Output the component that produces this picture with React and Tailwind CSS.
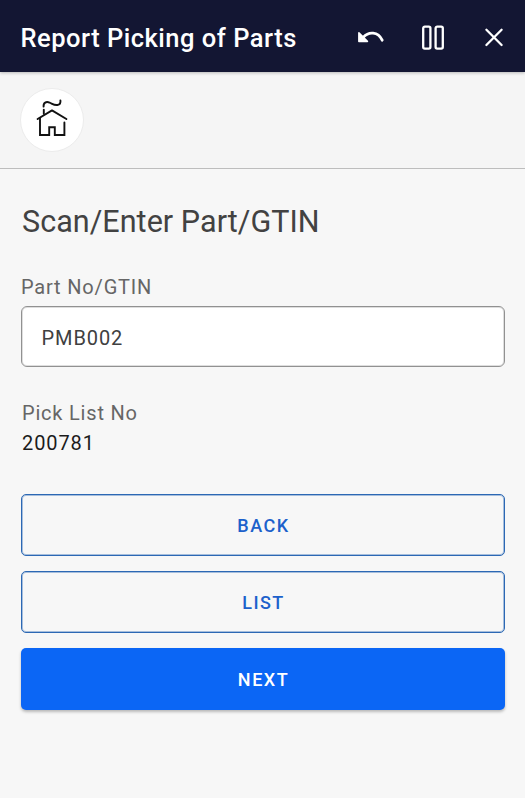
import { useState } from 'react';

/* ── Icons ───────────────────────────────────────────────────────────────── */
function UndoIcon() {
  return (
    <svg width="28" height="14" viewBox="0 0 28 14" fill="none">
      <path d="M1.9 1.9 L1.9 10.4 L10.4 10.4 Z" fill="#fff" stroke="#fff" strokeWidth="1.6" strokeLinejoin="round" />
      <path d="M6.4 6.2 C11.5 .4 21 .2 25.2 9.2" stroke="#fff" strokeWidth="2.8" strokeLinecap="round" />
    </svg>
  );
}

function PauseIcon() {
  return (
    <svg width="24" height="26" viewBox="0 0 24 26" fill="none" stroke="#fff" strokeWidth="2.3">
      <rect x="2.2" y="1.6" width="7.2" height="22" rx="1.6" />
      <rect x="14.6" y="1.6" width="7.2" height="22" rx="1.6" />
    </svg>
  );
}

function CloseIcon() {
  return (
    <svg width="20" height="20" viewBox="0 0 20 20" fill="none" stroke="#fff" strokeWidth="2.3" strokeLinecap="round">
      <path d="M2.4 1.8 L17.6 17 M17.6 1.8 L2.4 17" />
    </svg>
  );
}

function HomeIcon() {
  return (
    <svg width="32" height="38" viewBox="0 0 32 38" fill="none" stroke="#111" strokeWidth="1.9" strokeLinecap="round" strokeLinejoin="round">
      <path d="M7.6 7.6 C7.2 3.6 10.2 2.2 13.6 3.6 C16.4 4.8 18.2 6.4 21.4 6 C23.8 5.6 24.8 3.8 24.4 1.4" />
      <path d="M7.8 10.8 V14.8" />
      <path d="M1.6 20 L16 11.4 L30.4 20" />
      <path d="M4 19 V36 H13.2 V28.2 H18.8 V36 H28.4 V23.4" strokeLinejoin="miter" />
    </svg>
  );
}

/* ── Buttons ─────────────────────────────────────────────────────────────── */
const VARIANTS = {
  outline: 'border border-[#2c68b4] text-[#1c61cb] shadow-[inset_0_0_0_1px_rgba(44,104,180,0.4)]',
  primary: 'bg-[#0b66f5] text-white shadow-[0_2px_3px_rgba(0,0,0,0.25)]',
};

function ActionButton({ label, variant = 'outline' }) {
  return (
    <button className={`h-[62px] w-full rounded-[5px] pt-[1px] pl-[1px] text-lg font-medium tracking-[1.5px] ${VARIANTS[variant]}`}>
      {label}
    </button>
  );
}

export default function App() {
  const [partNo, setPartNo] = useState('PMB002');

  return (
    <div className="flex h-[800px] w-[525px] flex-col overflow-hidden border-b-2 border-white bg-[#f7f7f7] font-[Roboto,sans-serif]">
      {/* Header */}
      <header className="z-10 flex h-[72px] shrink-0 items-center bg-[#131633] pt-[3px] pr-[21px] pl-[20.5px] text-white shadow-[0_1px_3px_rgba(0,0,0,0.25)]">
        <h1 className="flex-1 pt-px text-[25.5px] font-medium tracking-[0.5px] whitespace-nowrap">Report Picking of Parts</h1>
        <div className="flex items-center">
          <button className="mr-[36px]"><UndoIcon /></button>
          <button className="mr-[39px]"><PauseIcon /></button>
          <button><CloseIcon /></button>
        </div>
      </header>

      {/* Toolbar */}
      <nav className="flex h-[97px] shrink-0 items-center border-b border-[#bdbdbd] bg-[#f5f5f5] px-[20px]">
        <button className="flex size-[64px] items-center justify-center rounded-full border border-[#ececec] bg-white pb-[4px]">
          <HomeIcon />
        </button>
      </nav>

      {/* Form */}
      <main className="flex flex-col pt-[33px] pr-[20px] pl-[21px]">
        <h2 className="h-10 pl-px text-[30.5px] leading-10 tracking-[0.05px] text-[#424242]">Scan/Enter Part/GTIN</h2>

        <label htmlFor="part" className="mt-[33px] text-xl leading-6 tracking-[0.82px] text-[#666]">Part No/GTIN</label>
        <input
          id="part"
          value={partNo}
          onChange={e => setPartNo(e.target.value)}
          className="mt-[7px] h-[61px] w-full rounded-[6px] border border-[#919191] bg-white px-[19.5px] pt-[2px] text-xl tracking-[0.9px] text-[#404040] shadow-[inset_0_0_0_1px_rgba(145,145,145,0.3)] outline-none"
        />

        <div className="mt-[31px] flex flex-col pl-px text-xl tracking-[0.8px]">
          <span className="leading-[30px] text-[#666]">Pick List No</span>
          <span className="leading-[30px] tracking-[0.9px] text-[#1c1c1c]">200781</span>
        </div>

        <div className="mt-[36px] flex flex-col gap-[15px]">
          <ActionButton label="BACK" />
          <ActionButton label="LIST" />
          <ActionButton label="NEXT" variant="primary" />
        </div>
      </main>
    </div>
  );
}
